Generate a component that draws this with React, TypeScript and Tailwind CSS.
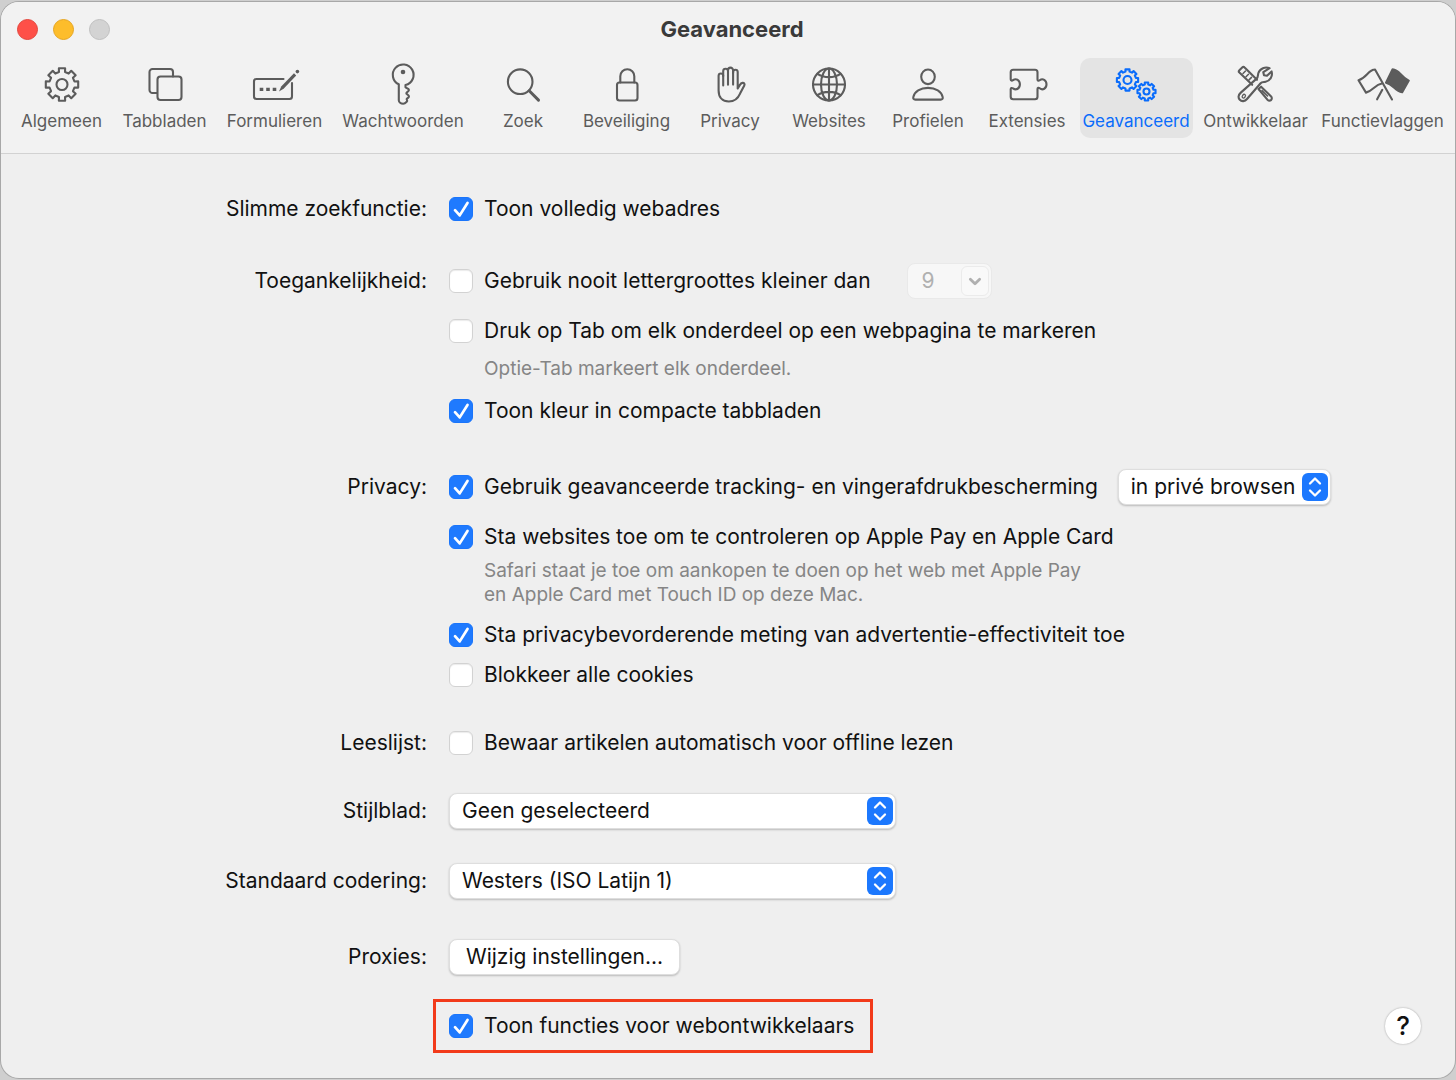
import React, { useState } from "react";

interface ToolbarItem {
  label: string;
  width: string;
  icon: React.ReactNode;
}

interface CheckRowProps {
  label: string;
  defaultChecked?: boolean;
  children?: React.ReactNode;
}

interface SelectBoxProps {
  label: string;
  options: string[];
  className?: string;
}

// Outline of an eight-toothed gear around (cx, cy)
const gearPath = (cx: number, cy: number, outer: number, inner: number) => {
  const points: string[] = [];
  for (let i = 0; i < 8; i++) {
    const base = (i * Math.PI) / 4 - Math.PI / 2;
    const corners: [number, number][] = [
      [inner, -0.24],
      [outer, -0.19],
      [outer, 0.19],
      [inner, 0.24],
    ];
    corners.forEach(([r, a]) => {
      const x = cx + r * Math.cos(base + a);
      const y = cy + r * Math.sin(base + a);
      points.push(`${x.toFixed(2)} ${y.toFixed(2)}`);
    });
  }
  return `M${points.join("L")}Z`;
};

const Icon: React.FC<{ width?: number; children: React.ReactNode }> = ({
  width = 40,
  children,
}) => (
  <svg
    width={width}
    height={40}
    viewBox={`0 0 ${width} 40`}
    fill="none"
    stroke="currentColor"
    strokeWidth={2.1}
    strokeLinecap="round"
    strokeLinejoin="round"
    className="shrink-0 overflow-visible"
    aria-hidden="true"
  >
    {children}
  </svg>
);

const toolbarItems: ToolbarItem[] = [
  {
    label: "Algemeen",
    width: "w-24",
    icon: (
      <Icon>
        <path d={gearPath(20, 19.5, 16.5, 12.8)} />
        <circle cx="20" cy="19.5" r="5.5" />
      </Icon>
    ),
  },
  {
    label: "Tabbladen",
    width: "w-[98px]",
    icon: (
      <Icon>
        <path d="M12 28H7.5a3 3 0 0 1-3-3V7a3 3 0 0 1 3-3H25a3 3 0 0 1 3 3v4.5" />
        <rect x="12.5" y="11.5" width="24" height="23.5" rx="3" />
      </Icon>
    ),
  },
  {
    label: "Formulieren",
    width: "w-[110px]",
    icon: (
      <Icon width={48}>
        <path d="M32.5 14H5.5A2.5 2.5 0 0 0 3 16.500v15A2.500 2.500 0 0 0 5.500 34h33a2.500 2.500 0 0 0 2.500-2.500V18" />
        <path
          d="M8.700 22.700h3.600v3.200H8.700zM15.200 22.700h3.600v3.200h-3.600zM21.700 22.700h3.600v3.200h-3.600z"
          fill="currentColor"
          stroke="none"
        />
        <path
          d="M28 26.500l2.200-5L43 8.200l2.200 2.200L32.600 23.800z"
          fill="currentColor"
          stroke="none"
        />
        <circle cx="46.400" cy="6.600" r="1.800" fill="currentColor" stroke="none" />
      </Icon>
    ),
  },
  {
    label: "Wachtwoorden",
    width: "w-[135px]",
    icon: (
      <Icon>
        <path d="M15.800 19.300A10.400 10.400 0 1 1 22.500 20v2.300l2.700 1.500c.8.500.9 1.600.2 2.300L23.800 27.600c-.6.600-.5 1 0 1.400l1.500 1.200c.9.800.8 1.900 0 2.500l-1.300 1c-.5.400-.5.700-.1 1.200.5.700.4 1.300-.2 1.900-1 1-2.200 1.900-3.500 1.900-2.400 0-4.400-1.600-4.400-3.400z" />
        <circle cx="20" cy="7" r="2.300" fill="currentColor" stroke="none" />
      </Icon>
    ),
  },
  {
    label: "Zoek",
    width: "w-[93px]",
    icon: (
      <Icon>
        <circle cx="17.200" cy="16.700" r="12.300" />
        <path d="M26.200 25.800l9.300 9.300" strokeWidth="3" />
      </Icon>
    ),
  },
  {
    label: "Beveiliging",
    width: "w-[102px]",
    icon: (
      <Icon>
        <rect x="10" y="17.500" width="20.500" height="18" rx="2.500" />
        <path d="M13.300 17.500V11.200a7 7 0 0 1 14 0v6.300" />
      </Icon>
    ),
  },
  {
    label: "Privacy",
    width: "w-[93px]",
    icon: (
      <Icon>
        <path d="M13.200 20.400V10.800a2.300 2.300 0 0 0-4.600 0V25.500c0 7 4 11 10.200 11 5.800 0 9-2.600 11.400-8.200l4.100-7.900c.8-1.600-.4-2.700-1.800-2.500-1.300.2-2 .9-2.600 2l-2.200 3.600V7a2.300 2.300 0 0 0-4.600 0v12.600" />
        <path d="M13.200 11V6.200a2.400 2.400 0 0 1 4.800 0v13.600M18 6.500V5.200a2.500 2.500 0 0 1 5.100 0V8" />
      </Icon>
    ),
  },
  {
    label: "Websites",
    width: "w-[93px]",
    icon: (
      <Icon>
        <circle cx="20" cy="19.500" r="16" />
        <ellipse cx="20" cy="19.500" rx="8" ry="16" />
        <path d="M20 3.500v32M4 19.500h32M8.400 8.800c6.500 4.400 16.700 4.400 23.200 0M8.400 30.200c6.500-4.400 16.700-4.400 23.200 0" />
      </Icon>
    ),
  },
  {
    label: "Profielen",
    width: "w-[93px]",
    icon: (
      <Icon>
        <ellipse cx="20" cy="11.800" rx="6.800" ry="7.300" />
        <path d="M7.300 34.600h25.400c1.600 0 2.300-1 2-2.500-1.100-5.400-7.100-9.200-14.700-9.200S6.400 26.700 5.300 32.100c-.3 1.500.4 2.500 2 2.500z" />
      </Icon>
    ),
  },
  {
    label: "Extensies",
    width: "w-[93px]",
    icon: (
      <Icon>
        <path d="M6.200 4.800H28a2.500 2.500 0 0 1 2.500 2.500v7.200c0 1.500 1.200 1.600 2.200.8 3-2.400 6.800-.2 6.800 4s-3.800 6.400-6.800 4c-1-.8-2.200-.7-2.200.8v7.600a2.500 2.500 0 0 1-2.500 2.500H6.200a2.500 2.500 0 0 1-2.500-2.500v-7.400c0-1.500 1.200-1.700 2.300-.9 3.200 2.300 6.900 0 6.900-4.100s-3.700-6.400-6.900-4.100c-1.100.8-2.300.6-2.300-.9v-7a2.500 2.500 0 0 1 2.500-2.500z" />
      </Icon>
    ),
  },
  {
    label: "Geavanceerd",
    width: "w-[113px]",
    icon: (
      <Icon>
        <path d={gearPath(11.5, 15, 10.8, 8.6)} />
        <circle cx="11.500" cy="15" r="4" />
        <path d={gearPath(30.5, 26.5, 9.2, 7.2)} />
        <circle cx="30.500" cy="26.500" r="3" />
      </Icon>
    ),
  },
  {
    label: "Ontwikkelaar",
    width: "w-[114px]",
    icon: (
      <Icon>
        <path d="M16.200 19.800L3.400 7.600c-.8-.8-.8-1.600 0-2.400L6.200 2.500c.8-.8 1.700-.8 2.400 0L21 14.800" />
        <path
          d="M7 8.500l2.500-2.500M10 11.700l2.500-2.500M13 14.900l2.500-2.500"
          strokeWidth="1.500"
        />
        <path d="M33.600 3.200c-4.200-1.800-9.800.2-11.200 4.800-.6 2-.3 4-1.500 5.400L4.800 27.600c-2.700 2.400-2.800 5.300-1 7.200s5 1.800 7.200-.8L24.600 18.200c1.400-1.500 3.200-1 5-1.400 4.600-1 7.300-5.600 6-10.400L31 10.800l-3-.6-.7-3z" />
        <ellipse
          cx="7.800"
          cy="31.200"
          rx="1.400"
          ry="2"
          strokeWidth="1.300"
          transform="rotate(35 7.800 31.200)"
        />
        <path d="M22.500 24l2.600-2.300 9.800 9.600c2.600 2.600-.8 5.900-3.500 3.400z" />
        <path d="M26 25.600l5.500 5.400" strokeWidth="1.500" />
      </Icon>
    ),
  },
  {
    label: "Functievlaggen",
    width: "w-32",
    icon: (
      <Icon width={56}>
        <path d="M20 4.500c-7 .2-8 8.200-16.500 10.700L11 27.600c7.200-1.600 8-7.600 16.600-9.300M20 4.500l17 30M27.300 24.800l-5.200 9.500" />
        <path
          d="M37.600 4.200c7 .2 8 8 16.200 11.400l-6.600 11.700c-7.400-1.400-9-8-16.200-9.600z"
          fill="currentColor"
        />
      </Icon>
    ),
  },
];

const CheckRow: React.FC<CheckRowProps> = ({
  label,
  defaultChecked = false,
  children,
}) => (
  <div className="flex h-9 items-center gap-5">
    <label className="flex items-center gap-[11px] whitespace-nowrap">
      <span className="relative flex size-6">
        <input
          type="checkbox"
          defaultChecked={defaultChecked}
          className="peer size-6 appearance-none rounded-md border border-[#d2d2d2] bg-white shadow-[inset_0_1px_1px_rgba(0,0,0,0.08)] checked:border-[#1a75fb] checked:bg-[#1f7afe] checked:shadow-none"
        />
        <svg
          viewBox="0 0 24 24"
          fill="none"
          stroke="white"
          strokeWidth={2.7}
          strokeLinecap="round"
          strokeLinejoin="round"
          className="pointer-events-none absolute inset-0 hidden size-6 peer-checked:block"
          aria-hidden="true"
        >
          <path d="M6 13.200l4.700 5.200L18.500 6" />
        </svg>
      </span>
      {label}
    </label>
    {children}
  </div>
);

const SelectBox: React.FC<SelectBoxProps> = ({
  label,
  options,
  className = "",
}) => (
  <div className={`relative ${className}`}>
    <select
      aria-label={label}
      className="block h-9 w-full appearance-none rounded-lg border border-[#dedede] bg-white pr-8 pl-3 shadow-[0_1px_2px_rgba(0,0,0,0.22)]"
    >
      {options.map((option) => (
        <option key={option}>{option}</option>
      ))}
    </select>
    <svg
      viewBox="0 0 26 28"
      fill="none"
      stroke="white"
      strokeWidth={2.3}
      strokeLinecap="round"
      strokeLinejoin="round"
      className="pointer-events-none absolute top-1 right-[3px] h-7 w-[26px] rounded-md bg-[#1c78fe]"
      aria-hidden="true"
    >
      <path d="M8 10.500l5-5 5 5M8 17.500l5 5 5-5" />
    </svg>
  </div>
);

const Section: React.FC<{
  title: string;
  className?: string;
  children: React.ReactNode;
}> = ({ title, className = "", children }) => (
  <section className={`grid grid-cols-[426px_1fr] gap-x-[22px] ${className}`}>
    <h2 className="text-right leading-9">{title}</h2>
    <div>{children}</div>
  </section>
);

const App: React.FC = () => {
  const [active, setActive] = useState("Geavanceerd");

  return (
    <div className="min-h-screen bg-[#cfcfcf] px-px py-0.5 font-['Inter',sans-serif] text-[21px] text-[#111111]">
      <div className="min-h-[calc(100vh-4px)] overflow-hidden rounded-[18px] bg-[#efefef] shadow-[0_0_0_1px_#a8a8a8]">
        <header className="border-b border-[#d2d2d2] bg-[#f2f2f2] pb-[15px]">
          <div className="mb-0.5 grid h-[54px] grid-cols-[1fr_auto_1fr] items-center pr-2 pl-4">
            <div className="flex gap-[15px]">
              <button
                aria-label="Sluit"
                className="size-[21px] rounded-full border border-[#e2463d] bg-[#fe5048]"
              />
              <button
                aria-label="Minimaliseer"
                className="size-[21px] rounded-full border border-[#e5a522] bg-[#fdbd2b]"
              />
              <button
                aria-label="Zoom"
                disabled
                className="size-[21px] rounded-full border border-[#bfbfbf] bg-[#d3d3d3]"
              />
            </div>
            <h1 className="text-[22px] font-bold text-[#3a3a3a]">
              Geavanceerd
            </h1>
          </div>
          <nav className="flex justify-center gap-1.5 pl-1">
            {toolbarItems.map((item) => (
              <button
                key={item.label}
                onClick={() => setActive(item.label)}
                className={`flex h-20 flex-col items-center rounded-[10px] pt-[7px] text-[17px] leading-8 ${item.width} ${
                  item.label === active
                    ? "bg-[#e4e4e4] text-[#0a6cfb]"
                    : "text-[#5c5c5c]"
                }`}
              >
                {item.icon}
                {item.label}
              </button>
            ))}
          </nav>
        </header>

        <main className="pt-[37px]">
          <Section title="Slimme zoekfunctie:">
            <CheckRow label="Toon volledig webadres" defaultChecked />
          </Section>

          <Section title="Toegankelijkheid:" className="mt-9">
            <CheckRow label="Gebruik nooit lettergroottes kleiner dan">
              <div className="relative ml-4 w-[85px]">
                <select
                  disabled
                  aria-label="Minimale lettergrootte"
                  className="block h-9 w-full appearance-none rounded-lg border border-[#e9e9e9] bg-[#f7f7f7] pl-[14px] text-[#b0b0b0] opacity-100"
                >
                  <option>9</option>
                </select>
                <svg
                  viewBox="0 0 28 30"
                  fill="none"
                  stroke="#b0b0b0"
                  strokeWidth={3}
                  strokeLinecap="round"
                  strokeLinejoin="round"
                  className="pointer-events-none absolute top-[3px] right-[3px] h-[30px] w-7 rounded-md border border-[#ebebeb] bg-[#f9f9f9]"
                  aria-hidden="true"
                >
                  <path d="M9 13l5 5 5-5" />
                </svg>
              </div>
            </CheckRow>
            <div className="mt-[14px]">
              <CheckRow label="Druk op Tab om elk onderdeel op een webpagina te markeren" />
            </div>
            <p className="mt-2 mb-3 pl-[35px] text-[19px] leading-6 text-[#858585]">
              Optie-Tab markeert elk onderdeel.
            </p>
            <CheckRow label="Toon kleur in compacte tabbladen" defaultChecked />
          </Section>

          <Section title="Privacy:" className="mt-10">
            <CheckRow
              label="Gebruik geavanceerde tracking- en vingerafdrukbescherming"
              defaultChecked
            >
              <SelectBox
                label="Wanneer bescherming gebruiken"
                options={["in privé browsen", "tijdens al het browsen"]}
                className="w-[213px]"
              />
            </CheckRow>
            <div className="mt-[14px]">
              <CheckRow
                label="Sta websites toe om te controleren op Apple Pay en Apple Card"
                defaultChecked
              />
            </div>
            <p className="mt-1 mb-[10px] pl-[35px] text-[19px] leading-6 text-[#858585]">
              Safari staat je toe om aankopen te doen op het web met Apple Pay
              <br />
              en Apple Card met Touch ID op deze Mac.
            </p>
            <CheckRow
              label="Sta privacybevorderende meting van advertentie-effectiviteit toe"
              defaultChecked
            />
            <div className="mt-1">
              <CheckRow label="Blokkeer alle cookies" />
            </div>
          </Section>

          <Section title="Leeslijst:" className="mt-8">
            <CheckRow label="Bewaar artikelen automatisch voor offline lezen" />
          </Section>

          <Section title="Stijlblad:" className="mt-8">
            <SelectBox
              label="Stijlblad"
              options={["Geen geselecteerd", "Anders..."]}
              className="w-[447px]"
            />
          </Section>

          <Section title="Standaard codering:" className="mt-[34px]">
            <SelectBox
              label="Standaard codering"
              options={["Westers (ISO Latijn 1)", "Unicode (UTF-8)"]}
              className="w-[447px]"
            />
          </Section>

          <Section title="Proxies:" className="mt-10">
            <button className="h-9 rounded-lg border border-[#dedede] bg-white px-4 shadow-[0_1px_2px_rgba(0,0,0,0.22)]">
              Wijzig instellingen...
            </button>
          </Section>

          <div className="mt-6 flex items-center justify-between pr-[34px] pb-6 pl-[432px]">
            <div className="border-[3px] border-[#f23a1a] py-[6px] pr-4 pl-[13px]">
              <CheckRow
                label="Toon functies voor webontwikkelaars"
                defaultChecked
              />
            </div>
            <button
              aria-label="Help"
              className="size-9 rounded-full bg-white text-[26px] leading-9 font-medium shadow-[0_0_2px_rgba(0,0,0,0.35)]"
            >
              ?
            </button>
          </div>
        </main>
      </div>
    </div>
  );
};

export default App;
